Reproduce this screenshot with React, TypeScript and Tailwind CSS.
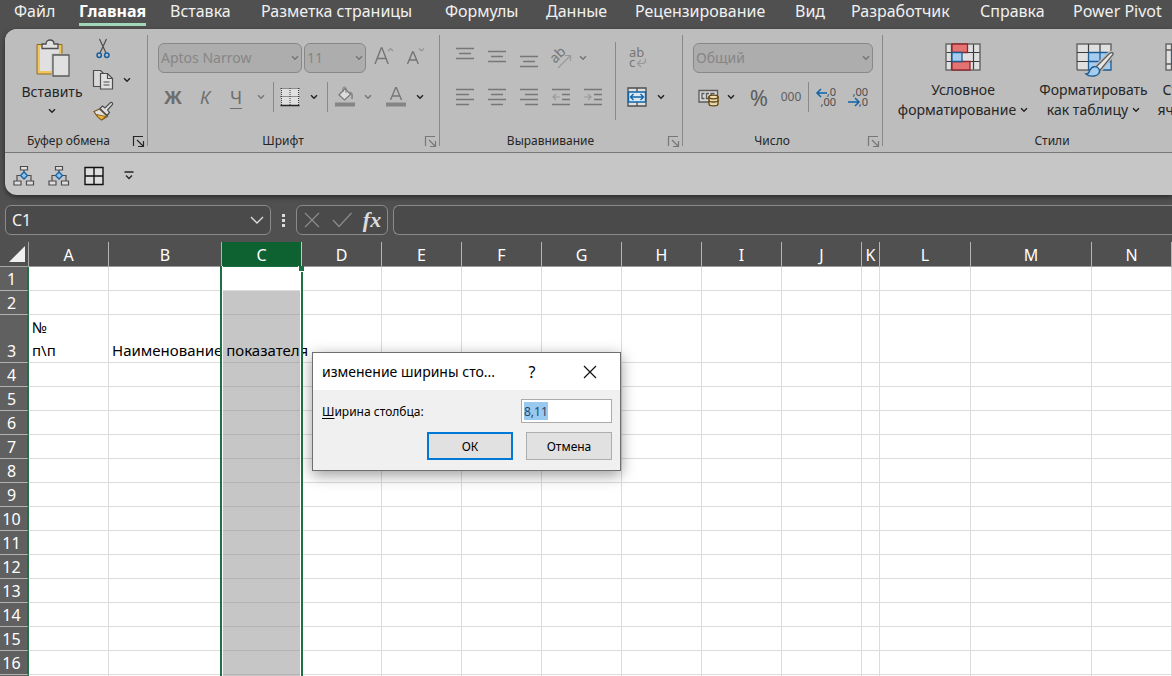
import type { ReactNode } from 'react';
import clsx from 'clsx';
import { twMerge } from 'tailwind-merge';

const tabs = [
  'Файл', 'Главная', 'Вставка', 'Разметка страницы', 'Формулы', 'Данные',
  'Рецензирование', 'Вид', 'Разработчик', 'Справка', 'Power Pivot',
];

const columns = [
  { name: 'A', width: 80 },
  { name: 'B', width: 113 },
  { name: 'C', width: 80 },
  { name: 'D', width: 80 },
  { name: 'E', width: 80 },
  { name: 'F', width: 80 },
  { name: 'G', width: 80 },
  { name: 'H', width: 80 },
  { name: 'I', width: 80 },
  { name: 'J', width: 80 },
  { name: 'K', width: 18 },
  { name: 'L', width: 91 },
  { name: 'M', width: 121 },
  { name: 'N', width: 80 },
];

const rows = Array.from({ length: 17 }, (_, i) => i + 1);

const cells: Record<string, ReactNode> = {
  A3: <>№<br />п\п</>,
  B3: 'Наименование показателя',
};

/* ---------- icons ---------- */

function Svg({ w, h, className, children }: { w: number; h: number; className?: string; children: ReactNode }) {
  return (
    <svg width={w} height={h} viewBox={`0 0 ${w} ${h}`} fill="none" className={clsx('block shrink-0 overflow-visible', className)} aria-hidden="true">
      {children}
    </svg>
  );
}

function Chevron({ className = 'text-[#262626]' }: { className?: string }) {
  return (
    <Svg w={8} h={6} className={className}>
      <path d="M1 1.2 4 4.2 7 1.2" stroke="currentColor" strokeWidth="1.5" />
    </Svg>
  );
}

function PasteIcon() {
  return (
    <Svg w={36} h={40}>
      <path d="M3 5.500H28V35H3z" fill="#f2c45c" stroke="#8a6a2a" />
      <path d="M6 8H25V32H6z" fill="#e0e0e0" />
      <path d="M8 9.500V5h4c0-3 2-4 4-4s4 1 4 4h4v4.500z" fill="#e0e0e0" stroke="#4d4d4d" strokeWidth="1.300" />
      <path d="M17.500 14.500H36V38H17.500z" fill="#bdbdbd" />
      <path d="M19 16h16v21H19z" fill="#e0e0e0" stroke="#5a5a5a" strokeWidth="1.300" />
    </Svg>
  );
}

function CutIcon() {
  return (
    <Svg w={14} h={20}>
      <path d="M3.500 0 10 14M10.500 0 4 14" stroke="#4d4d4d" strokeWidth="1.200" />
      <circle cx="3.200" cy="16.300" r="2.200" stroke="#1560a0" strokeWidth="1.500" />
      <circle cx="10.800" cy="16.300" r="2.200" stroke="#1560a0" strokeWidth="1.500" />
    </Svg>
  );
}

function CopyIcon() {
  return (
    <Svg w={22} h={22}>
      <path d="M8 17.500H1.500V1.500h7l3 3" stroke="#4d4d4d" strokeWidth="1.200" fill="#d8d8d8" />
      <path d="M8.500 4.500h7l5 5v10.500H8.500z" fill="#e0e0e0" stroke="#4d4d4d" strokeWidth="1.200" />
      <path d="M15.500 4.500v5h5M11.500 13h6M11.500 16h6" stroke="#4d4d4d" strokeWidth="1.200" />
    </Svg>
  );
}

function PainterIcon() {
  return (
    <Svg w={22} h={20}>
      <path d="M2 10.500 7.500 8l8 7.500L9.500 19C6 17 4 14 2 10.500z" fill="#e0e0e0" stroke="#7a5a20" strokeWidth="1.200" />
      <path d="M4.500 13.500 14 15.500 9.500 18.500C7.500 17.500 6 16 4.500 13.500z" fill="#f0b840" stroke="#8a6414" />
      <path d="m8 7.500 2.500-2.500 2.500 2L18.500 1.500c1.500-.5 2.500.7 2 2L15.500 9l2 2.500-2.500 3z" fill="#e0e0e0" stroke="#4d4d4d" strokeWidth="1.200" />
    </Svg>
  );
}

function LauncherIcon({ className }: { className?: string }) {
  return (
    <Svg w={11} h={11} className={className}>
      <path d="M.5 10V.5H10M4 4l6 6M10.500 5v5.500H5" stroke="currentColor" strokeWidth="1.200" />
    </Svg>
  );
}

function GrowFontIcon({ shrink = false }: { shrink?: boolean }) {
  return (
    <Svg w={20} h={20} className="text-[#747474]">
      {shrink ? (
        <>
          <path d="M1.500 18 6.500 6h.8l5 12M3.300 14h7.200" stroke="currentColor" strokeWidth="1.400" />
          <path d="M13 2.500 15.500 5 18 2.500" stroke="#939393" strokeWidth="1.200" />
        </>
      ) : (
        <>
          <path d="M1 18 7.200 2h.8l6.200 16M3.400 12.500h8.500" stroke="currentColor" strokeWidth="1.400" />
          <path d="M14 5 16.500 2.500 19 5" stroke="#939393" strokeWidth="1.200" />
        </>
      )}
    </Svg>
  );
}

function BordersIcon() {
  return (
    <Svg w={20} h={20}>
      <path d="M1 1h18v17H1z" fill="#e0e0e0" />
      <path d="M.5 1.500h19M.5 9.500h19" stroke="#3c3c3c" strokeDasharray="1 1" />
      <path d="M1.500 1v17M10 1v17M18.500 1v17" stroke="#3c3c3c" strokeDasharray="1 1" />
      <path d="M.5 18.500h19" stroke="#262626" strokeWidth="1.600" />
    </Svg>
  );
}

function FillIcon() {
  return (
    <Svg w={20} h={20}>
      <path d="m4 8 6-6.500 5.500 6-6 5.500z" fill="#dcdcdc" stroke="#7a7a7a" strokeWidth="1.200" />
      <path d="M8 5V1.500c0-2 3-2 3 0V6" stroke="#7a7a7a" />
      <path d="M14.500 5.500c2.500 0 3 2.500 2.500 6.500" stroke="#8a8a8a" strokeWidth="1.800" />
      <path d="M0 15.500h20v4H0z" fill="#858585" />
    </Svg>
  );
}

function FontColorIcon() {
  return (
    <Svg w={20} h={20}>
      <path d="M4.500 13 9.600.8h.8L15.500 13M6.300 9h7.400" stroke="#777" strokeWidth="1.400" />
      <path d="M0 15.500h20v4H0z" fill="#858585" />
    </Svg>
  );
}

function LinesIcon({ lines }: { lines: [number, number, number][] }) {
  return (
    <Svg w={18} h={20}>
      {lines.map(([x1, x2, y]) => (
        <path key={y} d={`M${x1} ${y + 0.5}H${x2}`} stroke="#777" strokeWidth="1.4" />
      ))}
    </Svg>
  );
}

function IndentIcon({ left = false }: { left?: boolean }) {
  return (
    <Svg w={18} h={20}>
      <path d="M0 2.500h18M10 7.500h8M10 12.500h8M0 17.500h18" stroke="#777" strokeWidth="1.400" />
      {left ? (
        <path d="M8 10H1M4 7l-3 3 3 3" stroke="#999" strokeWidth="1.200" />
      ) : (
        <path d="M0 10h7M4 7l3 3-3 3" stroke="#999" strokeWidth="1.200" />
      )}
    </Svg>
  );
}

function OrientationIcon() {
  return (
    <Svg w={22} h={22}>
      <text transform="translate(5 17) rotate(-45)" fontSize="14" fill="#777" fontFamily="Noto Sans">ab</text>
      <path d="M8 21 20 9M15 8.500h5.500V14" stroke="#999" strokeWidth="1.200" />
    </Svg>
  );
}

function WrapIcon() {
  return (
    <Svg w={18} h={22}>
      <text x="1" y="10" fontSize="13" fill="#777" fontFamily="Noto Sans">ab</text>
      <text x="1" y="20" fontSize="13" fill="#777" fontFamily="Noto Sans">c</text>
      <path d="M17 11.500c1.500 3 0 5-3 5h-4M13 13l-3.500 3.500L13 20" stroke="#999" strokeWidth="1.200" />
    </Svg>
  );
}

function MergeIcon() {
  return (
    <Svg w={20} h={20}>
      <path d="M1 1h18v18H1z" fill="#e0e0e0" stroke="#4d4d4d" strokeWidth="1.300" />
      <path d="M10 1v4M10 15v4" stroke="#4d4d4d" strokeWidth="1.300" />
      <path d="M1.500 5h17v10h-17z" fill="#d9e8f5" stroke="#1264a8" strokeWidth="1.400" />
      <path d="M3.500 10h13M6.500 7l-3 3 3 3M13.500 7l3 3-3 3" stroke="#1264a8" strokeWidth="1.400" />
    </Svg>
  );
}

function CurrencyIcon() {
  return (
    <Svg w={21} h={18}>
      <path d="M1 2.500h18.500v11.500H1z" fill="#d8d8d8" stroke="#5a5a5a" strokeWidth="1.300" />
      <path d="M6.500 5.500H4v5h2.500M11 5.500H8.500v5H11M13 7.500v-2h3.500" stroke="#5a5a5a" strokeWidth="1.300" />
      <path d="M11 9v7c0 2.500 9 2.500 9 0V9z" fill="#e6d6b0" stroke="#5e430c" strokeWidth="1.300" />
      <ellipse cx="15.500" cy="9" rx="4.500" ry="1.800" fill="#f2dfae" stroke="#5e430c" strokeWidth="1.300" />
      <path d="M11 12.500c0 2 9 2 9 0" stroke="#5e430c" strokeWidth="1.300" />
    </Svg>
  );
}

function DecimalIcon({ less = false }: { less?: boolean }) {
  return (
    <Svg w={20} h={22}>
      <text x="20" y={10} textAnchor="end" fontSize="11" fill="#4d4d4d" fontFamily="Noto Sans">{less ? ',00' : ',0'}</text>
      <text x="20" y={20} textAnchor="end" fontSize="11" fill="#4d4d4d" fontFamily="Noto Sans">{less ? ',0' : ',00'}</text>
      {less ? (
        <path d="M0 16h11M7 12l4 4-4 4" stroke="#1264a8" strokeWidth="1.500" />
      ) : (
        <path d="M1 7h10M5 3 1 7l4 4" stroke="#1264a8" strokeWidth="1.500" />
      )}
    </Svg>
  );
}

function ConditionalIcon() {
  return (
    <Svg w={36} h={30}>
      <path d="M1 2h34v26H1z" fill="#e0e0e0" />
      <path d="M6.500 2v26M28.500 2v26M1 10.500h34M1 19.500h34" stroke="#3c3c3c" strokeWidth="1.200" />
      <path d="M1 2h34v26H1z" stroke="#6a6a6a" strokeWidth="1.500" />
      <path d="M7 2h15.500v8.500H7zM7 19.500h18V28H7z" fill="#e57373" stroke="#8e2a2e" strokeWidth="1.300" />
      <path d="M7 10.500h10v9H7z" fill="#a5cdf0" stroke="#1f5c92" strokeWidth="1.300" />
    </Svg>
  );
}

function FormatTableIcon() {
  return (
    <Svg w={36} h={36}>
      <path d="M1 2h34v26H1z" fill="#e0e0e0" />
      <path d="M12.500 10.500H35V28H12.500z" fill="#a5cdf0" />
      <path d="M1 28V2h34v9" stroke="#6a6a6a" strokeWidth="1.500" />
      <path d="M12.500 2v9M24 2v9M1 10.500h11M1 19.500h11M1 28h11" stroke="#3c3c3c" strokeWidth="1.200" />
      <path d="M12.500 10.500H35V28H12.500zM24 10.500V28M12.500 19.500H35" stroke="#1f5c92" strokeWidth="1.300" />
      <path d="M19 26 33 12c2-2 5-1.500 4 .5L23.500 29z" stroke="#bdbdbd" strokeWidth="4" />
      <path d="M19 26 33 12c2-2 5-1.500 4 .5L23.500 29z" fill="#e6e6e6" stroke="#5a5a5a" strokeWidth="1.300" />
      <path d="M10 32c3 0 3-2 4-4 2-4 7-4.500 9-1s-1 6.500-5 7c-3 .4-6 0-8-2z" fill="#a5cdf0" stroke="#1f5c92" strokeWidth="1.400" />
    </Svg>
  );
}

function CellStylesIcon() {
  return (
    <Svg w={36} h={30}>
      <path d="M1 2h34v26H1z" fill="#e0e0e0" stroke="#6a6a6a" strokeWidth="1.500" />
      <path d="M6.500 2v26M29.500 2v26M1 8h34M1 22h34" stroke="#5a5a5a" strokeWidth="1.300" />
      <path d="M7 8.500h22v13H7z" fill="#a5cdf0" stroke="#1f5c92" />
    </Svg>
  );
}

function HierarchyIcon() {
  return (
    <Svg w={22} h={22}>
      <path d="M11 5v4M4 16v-5.500h14V16" stroke="#4d4d4d" strokeWidth="1.200" />
      <path d="M7.500 1.500h7v3.500h-7zM1 16h7v4H1zM13.500 16h7v4h-7z" fill="#dedede" stroke="#4d4d4d" strokeWidth="1.200" />
      <path d="m11 7 3.500 3.500L11 14l-3.500-3.500z" fill="#8ec1ee" stroke="#1560a0" strokeWidth="1.300" />
    </Svg>
  );
}

/* ---------- ribbon parts ---------- */

function IconButton({ label, className, children }: { label: string; className?: string; children: ReactNode }) {
  return (
    <button type="button" aria-label={label} className={twMerge('flex h-8 shrink-0 items-center justify-center', className)}>
      {children}
    </button>
  );
}

function Divider() {
  return <div className="my-1.5 w-px shrink-0 bg-[#888]" />;
}

function Group({ title, launcher, className, children }: { title: string; launcher?: string; className?: string; children: ReactNode }) {
  return (
    <section aria-label={title} className={clsx('flex shrink-0 flex-col', className)}>
      <div className="flex-1">{children}</div>
      <div className="flex h-[22px] items-center pr-[3px] text-xs text-[#262626]">
        <span className={clsx('flex-1 text-center', launcher && 'pr-[7px]')}>{title}</span>
        {launcher && (
          <button type="button" aria-label={`${title}: параметры`}>
            <LauncherIcon className={launcher} />
          </button>
        )}
      </div>
    </section>
  );
}

function Dropdown({ label, value, className }: { label: string; value: string; className: string }) {
  return (
    <div className={clsx('grid h-[30px] items-center', className)}>
      <select
        aria-label={label}
        className="col-start-1 row-start-1 h-full w-full appearance-none rounded-md border border-[#888] bg-[#adadad] px-0.5 text-sm text-[#868686]"
      >
        <option>{value}</option>
      </select>
      <Chevron className="pointer-events-none col-start-1 row-start-1 mr-[3px] justify-self-end text-[#777]" />
    </div>
  );
}

function BigButton({ icon, first, second, className }: { icon: ReactNode; first: string; second: string; className: string }) {
  return (
    <button type="button" className={clsx('flex shrink-0 flex-col items-center text-sm leading-5 whitespace-nowrap text-[#262626]', className)}>
      <span className="flex h-[38px] items-start">{icon}</span>
      <span>{first}</span>
      <span className="flex items-center gap-1">
        {second}
        <Chevron />
      </span>
    </button>
  );
}

function Ribbon() {
  return (
    <div className="ml-[5px] overflow-hidden rounded-l-xl bg-[#c6c6c6] shadow-[0_2px_5px_rgba(0,0,0,0.5)]">
      <div className="flex h-[124px] overflow-hidden border-b border-[#777] bg-[#bdbdbd]">
        <Group title="Буфер обмена" launcher="text-[#262626]" className="w-[142px] pl-1.5">
          <div className="flex pt-1">
            <button type="button" className="ml-1.5 flex w-[70px] flex-col items-center pt-1.5 text-sm leading-5 text-[#262626]">
              <PasteIcon />
              <span className="mt-[3px] mb-1.5">Вставить</span>
              <Chevron />
            </button>
            <div className="flex flex-col">
              <IconButton label="Вырезать" className="h-[31px] w-8"><CutIcon /></IconButton>
              <div className="flex">
                <IconButton label="Копировать" className="h-[31px] w-8"><CopyIcon /></IconButton>
                <IconButton label="Варианты копирования" className="h-[31px] w-4"><Chevron /></IconButton>
              </div>
              <IconButton label="Формат по образцу" className="h-[31px] w-8"><PainterIcon /></IconButton>
            </div>
          </div>
        </Group>
        <Divider />

        <Group title="Шрифт" launcher="text-[#777]" className="w-[291px]">
          <div className="flex items-center gap-0.5 pt-[13px] pl-2.5">
            <Dropdown label="Шрифт" value="Aptos Narrow" className="w-[144px]" />
            <Dropdown label="Размер шрифта" value="11" className="w-[62px]" />
            <IconButton label="Увеличить размер шрифта" className="w-8 pb-1"><GrowFontIcon /></IconButton>
            <IconButton label="Уменьшить размер шрифта" className="w-7 pb-1"><GrowFontIcon shrink /></IconButton>
          </div>
          <div className="flex items-center pt-[7px] pl-[9px] text-lg text-[#6e6e6e]">
            <IconButton label="Полужирный" className="w-8 font-bold">Ж</IconButton>
            <IconButton label="Курсив" className="w-8 italic">К</IconButton>
            <IconButton label="Подчёркнутый" className="w-[30px] underline underline-offset-4">Ч</IconButton>
            <IconButton label="Виды подчёркивания" className="w-5"><Chevron className="text-[#777]" /></IconButton>
            <div className="mx-0.5 h-[30px] w-px bg-[#888]" />
            <IconButton label="Границы" className="w-7"><BordersIcon /></IconButton>
            <IconButton label="Виды границ" className="w-5"><Chevron /></IconButton>
            <div className="mr-1 ml-[3px] h-[30px] w-px bg-[#888]" />
            <IconButton label="Цвет заливки" className="w-[26px]"><FillIcon /></IconButton>
            <IconButton label="Палитра заливки" className="w-5"><Chevron className="text-[#777]" /></IconButton>
            <IconButton label="Цвет текста" className="w-9"><FontColorIcon /></IconButton>
            <IconButton label="Палитра текста" className="w-3"><Chevron /></IconButton>
          </div>
        </Group>
        <Divider />

        <Group title="Выравнивание" launcher="text-[#777]" className="w-[242px]">
          <div className="flex pt-[13px] pl-[9px]">
            <div className="flex w-[166px] flex-col gap-[7px]">
              <div className="flex">
                <IconButton label="По верхнему краю" className="w-8"><LinesIcon lines={[[0, 18, 0], [3, 15, 5], [0, 18, 10]]} /></IconButton>
                <IconButton label="По середине" className="w-8"><LinesIcon lines={[[0, 18, 3], [3, 15, 8], [0, 18, 13]]} /></IconButton>
                <IconButton label="По нижнему краю" className="w-8"><LinesIcon lines={[[0, 18, 8], [3, 15, 13], [0, 18, 18]]} /></IconButton>
                <IconButton label="Ориентация" className="w-8"><OrientationIcon /></IconButton>
                <IconButton label="Виды ориентации" className="w-3"><Chevron className="text-[#777]" /></IconButton>
              </div>
              <div className="flex">
                <IconButton label="По левому краю" className="w-8"><LinesIcon lines={[[0, 18, 2], [0, 13, 7], [0, 18, 12], [0, 13, 17]]} /></IconButton>
                <IconButton label="По центру" className="w-8"><LinesIcon lines={[[0, 18, 2], [3, 15, 7], [0, 18, 12], [3, 15, 17]]} /></IconButton>
                <IconButton label="По правому краю" className="w-8"><LinesIcon lines={[[0, 18, 2], [5, 18, 7], [0, 18, 12], [5, 18, 17]]} /></IconButton>
                <IconButton label="Уменьшить отступ" className="w-8"><IndentIcon left /></IconButton>
                <IconButton label="Увеличить отступ" className="w-8"><IndentIcon /></IconButton>
              </div>
            </div>
            <div className="h-[78px] w-px bg-[#888]" />
            <div className="flex flex-col gap-[7px] pl-[5px]">
              <IconButton label="Перенести текст" className="w-8"><WrapIcon /></IconButton>
              <div className="flex">
                <IconButton label="Объединить ячейки" className="w-8"><MergeIcon /></IconButton>
                <IconButton label="Виды объединения" className="w-4"><Chevron /></IconButton>
              </div>
            </div>
          </div>
        </Group>
        <Divider />

        <Group title="Число" launcher="text-[#777]" className="w-[199px]">
          <div className="pt-3.5 pl-2.5">
            <Dropdown label="Числовой формат" value="Общий" className="w-[180px]" />
          </div>
          <div className="flex items-center pt-2 pl-2.5 text-[#5e5e5e]">
            <IconButton label="Финансовый формат" className="w-[30px]"><CurrencyIcon /></IconButton>
            <IconButton label="Денежные единицы" className="w-4"><Chevron /></IconButton>
            <IconButton label="Процентный формат" className="w-10 text-[22px]">%</IconButton>
            <IconButton label="Формат с разделителями" className="w-6 text-xs">000</IconButton>
            <div className="mr-px ml-[5px] h-[30px] w-px bg-[#888]" />
            <IconButton label="Увеличить разрядность" className="w-8"><DecimalIcon /></IconButton>
            <IconButton label="Уменьшить разрядность" className="w-8"><DecimalIcon less /></IconButton>
          </div>
        </Group>
        <Divider />

        <Group title="Стили" className="w-[341px]">
          <div className="flex pt-[13px] pl-[5px]">
            <BigButton icon={<ConditionalIcon />} first="Условное" second="форматирование" className="w-[150px]" />
            <BigButton icon={<FormatTableIcon />} first="Форматировать" second="как таблицу" className="w-[111px]" />
            <BigButton icon={<CellStylesIcon />} first="Стили" second="ячеек" className="w-[68px]" />
          </div>
        </Group>
      </div>

      <div className="flex h-[42px] items-center pt-[3px] pl-px">
        <IconButton label="Влияющие ячейки" className="w-[35px]"><HierarchyIcon /></IconButton>
        <IconButton label="Зависимые ячейки" className="w-[35px]"><HierarchyIcon /></IconButton>
        <IconButton label="Все границы" className="w-[35px]">
          <Svg w={20} h={20}>
            <path d="M1 1.500h18v17H1z" fill="#dedede" stroke="#111" strokeWidth="1.400" />
            <path d="M10 1v18M1 10h18" stroke="#111" strokeWidth="1.400" />
          </Svg>
        </IconButton>
        <IconButton label="Настройка панели быстрого доступа" className="w-[35px]">
          <Svg w={10} h={9} className="text-[#262626]">
            <path d="M.5 1h9M2 4.500l3 3 3-3" stroke="currentColor" strokeWidth="1.300" />
          </Svg>
        </IconButton>
      </div>
    </div>
  );
}

function FormulaBar() {
  return (
    <div className="flex h-[47px] items-start pt-2.5 pl-[5px]">
      <div className="flex h-[30px] w-[266px] items-center rounded-md border border-[#8a8a8a] bg-[#4a4a4a] px-1.5">
        <input aria-label="Поле имени" defaultValue="C1" className="min-w-0 flex-1 bg-transparent text-base text-[#f2f2f2] outline-none" />
        <button type="button" aria-label="Список имён">
          <Svg w={14} h={8} className="text-[#dcdcdc]">
            <path d="m1 1 6 6 6-6" stroke="currentColor" strokeWidth="1.400" />
          </Svg>
        </button>
      </div>
      <div className="flex h-[30px] w-[25px] flex-col items-center justify-center gap-0.5">
        <span className="size-[3px] bg-[#dcdcdc]" />
        <span className="size-[3px] bg-[#dcdcdc]" />
        <span className="size-[3px] bg-[#dcdcdc]" />
      </div>
      <div className="flex h-[30px] w-[92px] items-center rounded-md border border-[#8a8a8a] bg-[#4a4a4a]">
        <IconButton label="Отмена ввода" className="w-[30px]">
          <Svg w={16} h={16}><path d="m1 1 14 14M15 1 1 15" stroke="#8a8a8a" strokeWidth="1.300" /></Svg>
        </IconButton>
        <IconButton label="Ввод" className="w-[30px]">
          <Svg w={20} h={16}><path d="m1 8 6 6.500L19.500 1" stroke="#8a8a8a" strokeWidth="1.300" /></Svg>
        </IconButton>
        <IconButton label="Вставить функцию" className="w-[30px] pb-0.5 font-['Liberation_Serif',serif] text-[22px] font-bold text-[#dcdcdc] italic">fx</IconButton>
      </div>
      <input aria-label="Строка формул" className="ml-[5px] h-[30px] min-w-0 flex-1 rounded-l-md border border-r-0 border-[#8a8a8a] bg-[#4a4a4a] px-2 text-white outline-none" />
    </div>
  );
}

function Sheet() {
  return (
    <div className="relative flex-1 overflow-hidden bg-white">
      <table className="w-full min-w-[1172px] table-fixed border-separate border-spacing-0">
        <colgroup>
          <col className="w-[29px]" />
          {columns.map(column => <col key={column.name} style={{ width: column.width }} />)}
        </colgroup>
        <thead>
          <tr className="h-[25px] text-base text-white">
            <th className="border-r border-b border-[#a6a6a6] bg-[#505050] p-0" aria-label="Выделить всё">
              <Svg w={17} h={16} className="ml-2"><path d="M17 0v16H1z" fill="#efefef" /></Svg>
            </th>
            {columns.map(({ name }) => (
              <th
                key={name}
                scope="col"
                className={clsx(
                  'border-r border-b p-0 pt-0.5 leading-[22px] font-normal',
                  name === 'C' ? 'border-r-[#c6c6c6] border-b-[#1e7145] bg-[#0e6232]' : 'border-r-[#b4b4b4] border-b-[#999] bg-[#505050]',
                )}
              >
                {name}
              </th>
            ))}
          </tr>
        </thead>
        <tbody>
          {rows.map(row => (
            <tr key={row} className={row === 3 ? 'h-12' : 'h-6'}>
              <th
                scope="row"
                className="border-r-2 border-b border-r-[#1e7145] border-b-[#b0b0b0] bg-[#606060] p-0 pr-1 align-bottom text-base leading-[21px] font-normal text-white"
              >
                {row}
              </th>
              {columns.map(({ name }) => (
                <td
                  key={name}
                  className={clsx(
                    'border-r border-b p-0 pl-[3px] align-bottom text-[15px] leading-[23px] whitespace-nowrap text-black',
                    name === 'C' && row > 1 ? 'border-[#b3b3b3] bg-[#c6c6c6]' : 'border-[#dcdcdc]',
                  )}
                >
                  {cells[name + row]}
                </td>
              ))}
            </tr>
          ))}
        </tbody>
      </table>

      {/* frame of the selected column */}
      <div className="pointer-events-none absolute top-[24px] bottom-0 left-[220px] w-[83px] border-x-2 border-[#1e7145]">
        <div className="h-full border-x border-white" />
        <div className="absolute top-0 -right-[3px] size-[6px] border-b border-l border-white bg-[#1e7145]" />
      </div>
    </div>
  );
}

function WidthDialog() {
  return (
    <form
      role="dialog"
      aria-label="изменение ширины столбца"
      onSubmit={e => e.preventDefault()}
      className="absolute top-[352px] left-[312px] flex w-[309px] flex-col border border-[#6e6e6e] bg-[#f0f0f0] text-xs text-black shadow-[0_4px_14px_rgba(0,0,0,0.4)]"
    >
      <div className="flex h-[37px] items-center bg-white pl-[9px]">
        <h2 className="flex-1 text-sm">изменение ширины сто...</h2>
        <button type="button" aria-label="Справка" className="w-8 text-base">?</button>
        <button type="button" aria-label="Закрыть" className="mr-2 ml-5 flex w-11 justify-center">
          <Svg w={14} h={14}><path d="m1 1 12 12M13 1 1 13" stroke="#111" strokeWidth="1.200" /></Svg>
        </button>
      </div>
      <div className="flex items-center justify-between px-2 pt-[9px] pl-[9px]">
        <label htmlFor="column-width" className="pt-0.5"><u className="underline-offset-2">Ш</u>ирина столбца:</label>
        <div className="flex h-6 w-[91px] items-center border border-[#ababab] bg-white px-0.5">
          <input
            id="column-width"
            defaultValue="8,11"
            className="field-sizing-content h-[18px] bg-[#99c9ef] text-[#26476b] outline-none"
          />
        </div>
      </div>
      <div className="flex justify-end gap-[13px] px-2 pt-[9px] pb-2.5">
        <button type="submit" className="h-7 w-[86px] border-2 border-[#0078d7] bg-[#e1e1e1] pt-0.5">ОК</button>
        <button type="button" className="h-7 w-[86px] border border-[#adadad] bg-[#e1e1e1] pt-0.5">Отмена</button>
      </div>
    </form>
  );
}

export default function App() {
  return (
    <main className="relative flex h-screen flex-col overflow-hidden bg-[#505050] font-['Noto_Sans',sans-serif]">
      <nav
        aria-label="Лента"
        className="grid h-[29px] grid-cols-[65px_91px_91px_184px_101px_89px_160px_56px_129px_93px_1fr] items-start pl-3.5 text-base leading-[22px] whitespace-nowrap text-[#f0f0f0]"
      >
        {tabs.map(tab => (
          <button
            key={tab}
            type="button"
            className={clsx(
              'h-[26px] justify-self-start border-b-[3px] pb-0.5',
              tab === 'Главная' ? 'border-[#a0d8b9] font-bold text-white' : 'border-transparent',
            )}
          >
            {tab}
          </button>
        ))}
      </nav>
      <Ribbon />
      <FormulaBar />
      <Sheet />
      <WidthDialog />
    </main>
  );
}
